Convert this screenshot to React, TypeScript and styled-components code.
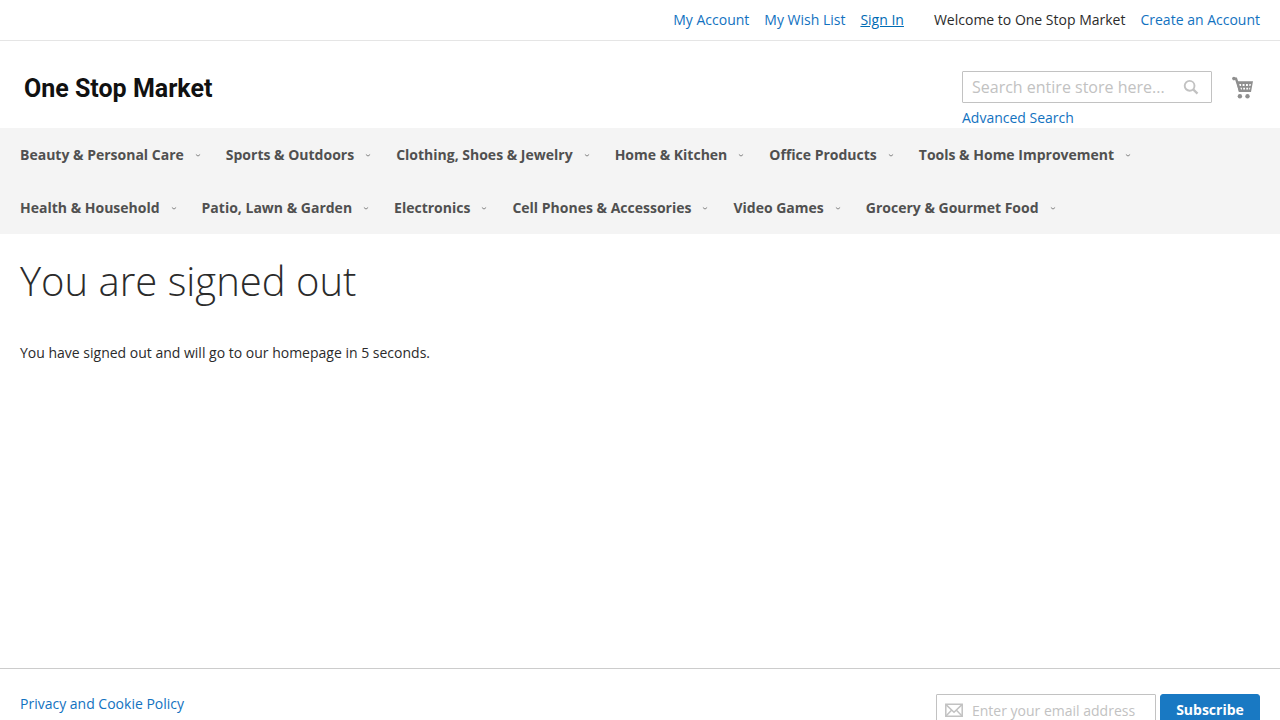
import React from 'react';
import styled, { createGlobalStyle } from 'styled-components';

const GlobalStyle = createGlobalStyle`
  *, *::before, *::after { box-sizing: border-box; }
  body {
    margin: 0;
    background: #fff;
    color: #2b2b2b;
    font: 400 14px/20px 'Open Sans', 'Noto Sans', 'Liberation Sans', sans-serif;
  }
`;

const TextLink = styled.a<{ $active?: boolean }>`
  color: ${(p) => (p.$active ? '#006bb4' : '#1272bf')};
  text-decoration: ${(p) => (p.$active ? 'underline' : 'none')};
  &:hover { text-decoration: underline; }
`;

const Panel = styled.div`
  display: flex;
  justify-content: flex-end;
  gap: 30px;
  padding: 10px 20px;
  border-bottom: 1px solid #e5e5e5;
`;

const PanelLinks = styled.ul`
  display: flex;
  gap: 15px;
  margin: 0;
  padding: 0;
  list-style: none;
`;

const Header = styled.header`
  display: flex;
  justify-content: space-between;
  align-items: flex-start;
  padding: 30px 20px 0;
`;

const Logo = styled.a`
  padding: 3px 4px 0;
  color: #111;
  font: 700 25px/30px Roboto, 'Liberation Sans', sans-serif;
  text-decoration: none;
`;

const HeaderTools = styled.div`
  display: flex;
  gap: 20px;
  padding-right: 6px;
`;

const SearchForm = styled.form`
  display: flex;
  flex-direction: column;
  gap: 5px;
  width: 250px;
`;

const Field = styled.label`
  display: flex;
  align-items: center;
  height: 32px;
  border: 1px solid #c2c2c2;
  border-radius: 1px;
  background: #fff;
`;

const TextInput = styled.input<{ $size: number }>`
  flex: 1;
  min-width: 0;
  height: 30px;
  padding: 0 9px;
  border: 0;
  outline: 0;
  background: transparent;
  color: #333;
  font: 400 ${(p) => p.$size}px/20px 'Open Sans', 'Noto Sans', sans-serif;
  &::placeholder { color: #c2c2c2; opacity: 1; }
`;

const IconButton = styled.button`
  display: flex;
  padding: 0 12px 0 0;
  border: 0;
  background: none;
  color: #c2c2c2;
`;

const CartLink = styled.a`
  display: block;
  height: 34px;
  padding-top: 5px;
  color: #8f8f8f;
`;

const Nav = styled.nav`
  padding: 0 20px;
  background: #f4f4f4;
`;

const NavList = styled.ul`
  display: flex;
  flex-wrap: wrap;
  margin: 0;
  padding: 0;
  list-style: none;
`;

const NavItem = styled.a`
  display: flex;
  align-items: center;
  gap: 11px;
  padding-right: 25px;
  color: #505050;
  font-weight: 700;
  line-height: 53px;
  text-decoration: none;
`;

const Main = styled.main`
  min-height: 434px;
  padding: 20px 20px 40px;
`;

const Title = styled.h1`
  margin: 0 0 35px;
  font-size: 40px;
  font-weight: 300;
  line-height: 54px;
`;

const Message = styled.p`
  margin: 0;
`;

const Footer = styled.footer`
  display: flex;
  justify-content: space-between;
  align-items: flex-start;
  padding: 25px 20px;
  border-top: 1px solid #ccc;
`;

const Newsletter = styled.form`
  display: flex;
  gap: 4px;
`;

const EmailField = styled(Field)`
  width: 220px;
  padding-left: 8px;
`;

const SubscribeButton = styled.button`
  width: 100px;
  height: 32px;
  padding: 0;
  border: 1px solid #1979c3;
  border-radius: 3px;
  background: #1979c3;
  color: #fff;
  font: 700 14px/16px 'Open Sans', 'Noto Sans', sans-serif;
`;

const SearchIcon = () => (
  <svg width="16" height="16" viewBox="0 0 16 16" fill="none" stroke="currentColor" aria-hidden="true">
    <circle cx="6.6" cy="6.8" r="4.9" strokeWidth="1.9" />
    <path d="M10.2 10.4l4.3 4.2" strokeWidth="2.3" />
  </svg>
);

const CartIcon = () => (
  <svg width="22" height="24" viewBox="0 0 22 24" aria-hidden="true">
    <circle cx="1.9" cy="2.6" r="1.8" fill="currentColor" />
    <path d="M2 2.6h2l4 12.1" fill="none" stroke="currentColor" strokeWidth="2.4" />
    <path
      fill="currentColor"
      fillRule="evenodd"
      d="M4.3 5.3H21l-2 10.7H6.8zM7.2 8v2h1.9V8zM10.6 8v2h1.9V8zM14 8v2h1.9V8zM17.3 8v2h1.2l.4-2zM8.2 11.7v1.9h1.7v-1.9zM11.2 11.7v1.9h1.8v-1.9zM14.3 11.7v1.9h1.8v-1.9zM17.2 11.7v1.9h.7l.4-1.9z"
    />
    <circle cx="7.9" cy="20.3" r="2.2" fill="currentColor" />
    <circle cx="15.5" cy="20.3" r="2.2" fill="currentColor" />
  </svg>
);

const Chevron = () => (
  <svg width="6" height="4" viewBox="0 0 6 4" fill="none" stroke="#858585" aria-hidden="true">
    <path d="M.9 1.5L3 3.1l2.1-1.6" />
  </svg>
);

const EnvelopeIcon = () => (
  <svg width="18" height="14" viewBox="0 0 18 14" fill="none" stroke="#c2c2c2" strokeWidth="1.5" aria-hidden="true">
    <path d="M.8 1.3h16.4v11.9H.8z" />
    <path d="M1 1.6l8 7.6 8-7.6M1 12.9l5.5-5.7M17 12.9l-5.5-5.7" />
  </svg>
);

const categories = [
  'Beauty & Personal Care',
  'Sports & Outdoors',
  'Clothing, Shoes & Jewelry',
  'Home & Kitchen',
  'Office Products',
  'Tools & Home Improvement',
  'Health & Household',
  'Patio, Lawn & Garden',
  'Electronics',
  'Cell Phones & Accessories',
  'Video Games',
  'Grocery & Gourmet Food',
];

export default function App() {
  return (
    <>
      <GlobalStyle />
      <Panel>
        <PanelLinks>
          <li><TextLink href="#account">My Account</TextLink></li>
          <li><TextLink href="#wishlist">My Wish List</TextLink></li>
          <li><TextLink href="#login" $active>Sign In</TextLink></li>
        </PanelLinks>
        <PanelLinks>
          <li>Welcome to One Stop Market</li>
          <li><TextLink href="#create">Create an Account</TextLink></li>
        </PanelLinks>
      </Panel>
      <Header>
        <Logo href="#home">One Stop Market</Logo>
        <HeaderTools>
          <SearchForm role="search">
            <Field>
              <TextInput $size={16} type="text" placeholder="Search entire store here..." aria-label="Search" />
              <IconButton type="button" aria-label="Search"><SearchIcon /></IconButton>
            </Field>
            <TextLink href="#advanced">Advanced Search</TextLink>
          </SearchForm>
          <CartLink href="#cart" aria-label="My Cart"><CartIcon /></CartLink>
        </HeaderTools>
      </Header>
      <Nav>
        <NavList>
          {categories.map((name) => (
            <li key={name}>
              <NavItem href="#category">{name}<Chevron /></NavItem>
            </li>
          ))}
        </NavList>
      </Nav>
      <Main>
        <Title>You are signed out</Title>
        <Message>You have signed out and will go to our homepage in 5 seconds.</Message>
      </Main>
      <Footer>
        <TextLink href="#privacy">Privacy and Cookie Policy</TextLink>
        <Newsletter>
          <EmailField>
            <EnvelopeIcon />
            <TextInput $size={14} type="email" placeholder="Enter your email address" aria-label="Email address" />
          </EmailField>
          <SubscribeButton type="button">Subscribe</SubscribeButton>
        </Newsletter>
      </Footer>
    </>
  );
}
